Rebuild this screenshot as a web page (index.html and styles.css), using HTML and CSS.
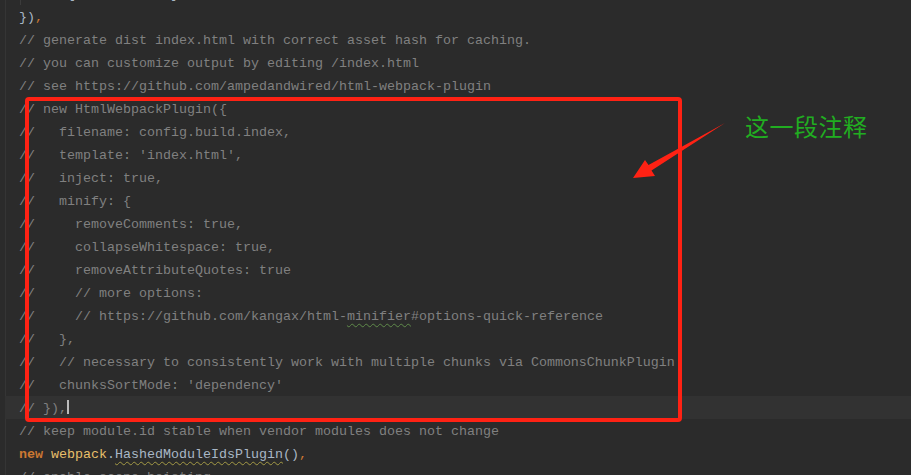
FILE: index.html
```html
<!DOCTYPE html>
<html lang="zh">
<head>
<meta charset="utf-8">
<title>webpack config</title>
<link rel="stylesheet" href="styles.css">
</head>
<body>
<div class="editor">
  <div class="code">
    <div class="line partial"><span class="guide"></span><span class="plain">    : { safe: true }</span></div>
    <div class="line"><span class="plain">})</span><span class="kw">,</span></div>
    <div class="line cm">// generate dist index.html with correct asset hash for caching.</div>
    <div class="line cm">// you can customize output by editing /index.html</div>
    <div class="line cm">// see https://github.com/ampedandwired/html-webpack-plugin</div>
    <div class="line cm">// new HtmlWebpackPlugin({</div>
    <div class="line cm">//   filename: config.build.index,</div>
    <div class="line cm">//   template: 'index.html',</div>
    <div class="line cm">//   inject: true,</div>
    <div class="line cm">//   minify: {</div>
    <div class="line cm">//     removeComments: true,</div>
    <div class="line cm">//     collapseWhitespace: true,</div>
    <div class="line cm">//     removeAttributeQuotes: true</div>
    <div class="line cm">//     // more options:</div>
    <div class="line cm">//     // https://github.com/kangax/html-<span class="typo">minifier</span>#options-quick-reference</div>
    <div class="line cm">//   },</div>
    <div class="line cm">//   // necessary to consistently work with multiple chunks via CommonsChunkPlugin</div>
    <div class="line cm">//   chunksSortMode: 'dependency'</div>
    <div class="line cm current">// }),<span class="caret"></span></div>
    <div class="line cm">// keep module.id stable when vendor modules does not change</div>
    <div class="line"><span class="kw bold">new</span> <span class="obj">webpack</span><span class="plain">.</span><span class="cls warn">HashedModuleIdsPlugin</span><span class="plain">()</span><span class="kw">,</span></div>
    <div class="line cm">// enable scope hoisting</div>
  </div>

  <div class="mark-box"></div>
  <svg class="mark-arrow" width="911" height="475" viewBox="0 0 911 475" aria-hidden="true">
    <polygon points="633,178 645,160 648.5,165 725,123 651.5,170.5 655,176" fill="#ff2214"/>
  </svg>
  <div class="mark-label">这一段注释</div>
</div>
</body>
</html>
```

FILE: styles.css
```css
html, body {
  margin: 0;
  padding: 0;
  background: #2b2b2b;
  height: 100%;
  overflow: hidden;
}

.editor {
  position: relative;
  height: 475px;
  overflow: hidden;
  background: #2b2b2b;
}

.code {
  margin-top: -18px;
  margin-left: 5px;
  border-left: 1px solid #353535;
  padding-left: 13px;
  font-family: "Liberation Mono", "DejaVu Sans Mono", monospace;
  font-size: 13.33px;
  color: #a9b7c6;
}

.line {
  position: relative;
  height: 20px;
  padding-top: 3px;
  line-height: 20px;
  white-space: pre;
  margin-left: -14px;
  padding-left: 14px;
}

.partial .guide {
  position: absolute;
  left: 15px;
  top: 0;
  height: 23px;
  border-left: 1px solid #3b3b3b;
}

.cm {
  color: #808080;
}

.plain {
  color: #a9b7c6;
}

.kw {
  color: #cc7832;
}

.bold {
  font-weight: bold;
}

.obj {
  color: #e8bf6a;
}

.cls {
  color: #a9b7c6;
}

.warn {
  text-decoration: underline wavy #a39a45;
  text-decoration-thickness: 1px;
  text-underline-offset: 3px;
}

.typo {
  text-decoration: underline wavy #5f8a4a;
  text-decoration-thickness: 1px;
  text-underline-offset: 3px;
}

.current {
  background: #323232;
}

.caret {
  display: inline-block;
  width: 2px;
  height: 14px;
  background: #bbbbbb;
  vertical-align: -2px;
}

.mark-box {
  position: absolute;
  left: 25px;
  top: 97px;
  width: 649px;
  height: 317px;
  border: 4px solid #ff2214;
  border-radius: 4px;
}

.mark-arrow {
  position: absolute;
  left: 0;
  top: 0;
}

.mark-label {
  position: absolute;
  left: 745px;
  top: 109px;
  font-family: "Noto Sans CJK SC", sans-serif;
  font-size: 24px;
  line-height: 34px;
  color: #21ad21;
  letter-spacing: 0.5px;
}
```
